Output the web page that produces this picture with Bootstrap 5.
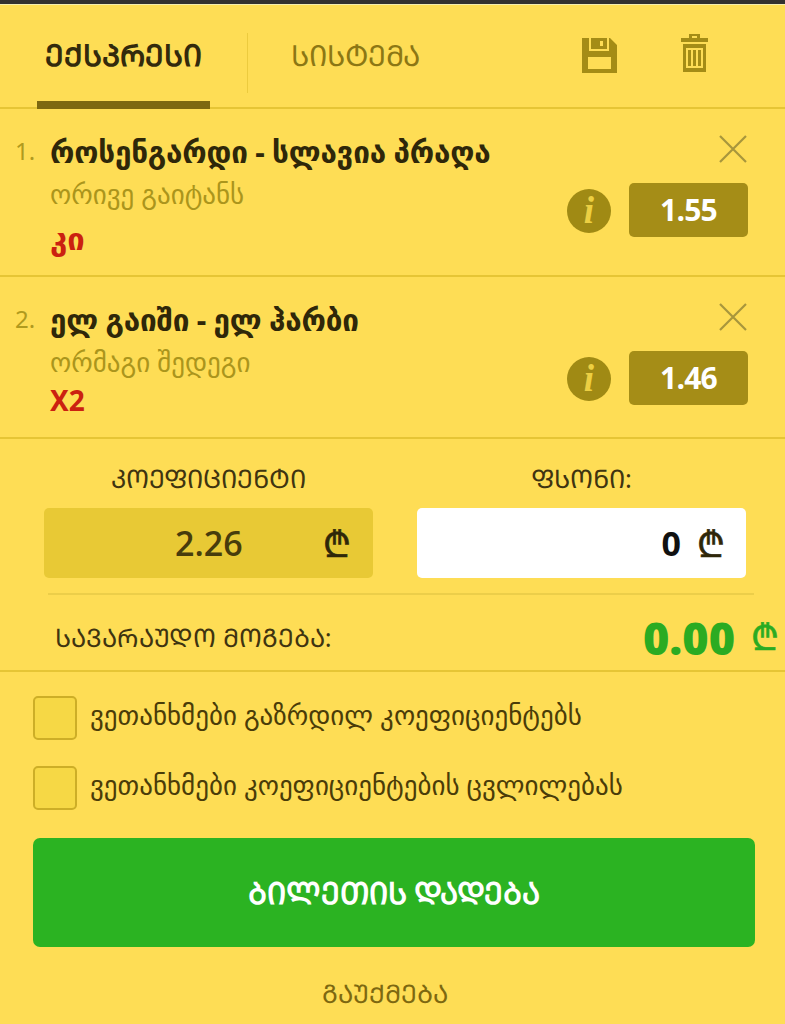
<!DOCTYPE html>
<html>
<head>
    <title>ბილეთი</title>
    <link href="https://cdn.jsdelivr.net/npm/bootstrap@5.3.0/dist/css/bootstrap.min.css" rel="stylesheet">
    <style>
        body { background: #fedd55; font-family: "Noto Sans", "DejaVu Sans", sans-serif; color: #3a3010; height: 1024px; overflow: hidden; }
        .topstrip { height: 5px; background: #333130; border-bottom: 1px solid #f5eeb0; }
        .tabbar { height: 104px; border-bottom: 2px solid #e6c535; }
        .tab-item { line-height: 1; padding-top: 35px; height: 104px; }
        .tab-on { width: 173px; margin-left: 37px; font-size: 30px; font-weight: 700; border-bottom: 8px solid #7d6810; text-align: center; color: #332a0c; }
        .tab-sep { width: 1px; height: 60px; margin: 28px 0 0 37px; background: #eccb3e; }
        .tab-off { margin-left: 43px; font-size: 29px; color: #8c7714; }
        .tab-icons { margin-left: auto; padding: 33px 77px 0 0; gap: 64px; }
        .tab-trash { margin-top: -4px; }
        .slip-row { border-bottom: 2px solid #e6c535; position: relative; padding-left: 50px; }
        .slip-first { height: 168px; padding-top: 24px; }
        .slip-second { height: 162px; padding-top: 24px; }
        .slip-no { position: absolute; left: 15px; top: 30px; font-size: 24px; line-height: 1; color: #b09a1e; }
        .slip-title { font-size: 29.7px; font-weight: 700; line-height: 38px; color: #2f2709; letter-spacing: -.2px; }
        .slip-pick { font-size: 27px; line-height: 30px; margin-top: 8px; color: #ab951c; }
        .slip-mark { font-size: 28px; font-weight: 700; line-height: 30px; margin-top: 14px; color: #cb2110; }
        .slip-first .slip-mark { font-size: 31px; }
        .slip-second .slip-mark { margin-top: 8px; }
        .slip-close { position: absolute; left: 719px; top: 26px; }
        .slip-info { position: absolute; left: 567px; top: 80px; width: 44px; height: 44px; border-radius: 50%; background: #a08a14; color: #edcf42; font: italic 700 37px/44px "Liberation Serif", serif; text-align: center; }
        .slip-odds { position: absolute; left: 629px; top: 74px; width: 119px; height: 54px; border-radius: 5px; background: #a58d17; color: #fff; font: 700 30px/54px "Open Sans", sans-serif; text-align: center; letter-spacing: -.8px; }
        .sum-wrap { padding: 25px 39px 0 44px; gap: 44px; }
        .sum-col { width: 329px; }
        .sum-label { font-size: 25.7px; line-height: 30px; text-align: center; color: #3f3410; height: 44px; }
        .sum-box { height: 70px; border-radius: 5px; font: 600 34px/70px "Open Sans", sans-serif; }
        .sum-rate { background: #e8c935; color: #473c0c; padding: 0 22px 0 131px; }
        .sum-stake { background: #fff; color: #111; padding: 0 21px 0 0; font-weight: 700; }
        .lari { font-family: "DejaVu Sans", sans-serif; font-size: 36px; font-weight: 400; line-height: 74px; color: #2f2709; -webkit-text-stroke: .6px #2f2709; }
        .sum-rule { height: 2px; margin: 15px 31px 0 48px; background: #ecce4a; }
        .win-row { height: 77px; border-bottom: 2px solid #e6c535; padding: 10px 6px 0 55px; }
        .win-label { font-size: 25.5px; color: #3f3410; }
        .win-amount { font: 800 45px/1 "Open Sans", sans-serif; color: #2bab22; }
        .win-lari { color: #2bab22; margin-left: 16px; font-size: 36px; font-family: "DejaVu Sans", sans-serif; -webkit-text-stroke: .6px #2bab22; }
        .agree { padding: 24px 30px 0 33px; }
        .agree-line { height: 44px; margin-bottom: 26px; gap: 13px; font-size: 27px; color: #4a3c08; }
        .agree-text { margin-top: -6px; }
        .agree-line .form-check-input { width: 44px; height: 44px; margin: 0; background-color: #f6d845; border: 2px solid #cdae27; border-radius: 5px; flex: none; }
        .place-bet { display: block; width: 722px; height: 109px; margin: 28px 0 0 33px; background: #2bb322; border: 0; border-radius: 7px; color: #fff; font-size: 30.3px; font-weight: 700; }
        .place-bet:hover { background: #2bb322; color: #fff; }
        .cancel-link { display: block; text-align: center; margin-top: 31px; padding-right: 15px; font-size: 25.7px; line-height: 32px; color: #7d6810; text-decoration: none; }
    </style>
</head>
<body>
    <div class="topstrip"></div>

    <div class="tabbar d-flex">
        <div class="tab-item tab-on">ᲔᲥᲡᲞᲠᲔᲡᲘ</div>
        <div class="tab-sep"></div>
        <div class="tab-item tab-off">ᲡᲘᲡᲢᲔᲛᲐ</div>
        <div class="tab-icons d-flex">
            <svg width="35" height="35" viewBox="0 0 35 35"><path fill="#a48c16" fill-rule="evenodd" d="M0 0H28L35 7V35H0ZM7 0V13H27V0ZM9 0V11H25V0ZM18 3H21V8H18ZM6 19V31H29V19Z"/></svg>
            <svg class="tab-trash" width="27" height="38" viewBox="0 0 27 38"><path fill="#a48c16" fill-rule="evenodd" d="M8 0H19V4H27V8H0V4H8ZM11 2V4H16V2ZM2 10H25V38H2ZM5 14V34H22V14ZM7 16H10V32H7ZM12 16H15V32H12ZM17 16H20V32H17Z"/></svg>
        </div>
    </div>

    <div class="slip-row slip-first">
        <span class="slip-no">1.</span>
        <div class="slip-title">როსენგარდი - სლავია პრაღა</div>
        <div class="slip-pick">ორივე გაიტანს</div>
        <div class="slip-mark">კი</div>
        <svg class="slip-close" width="28" height="28" viewBox="0 0 28 28"><path stroke="#a8963c" stroke-width="2.2" fill="none" d="M1 1L27 27M27 1L1 27"/></svg>
        <span class="slip-info">i</span>
        <span class="slip-odds">1.55</span>
    </div>

    <div class="slip-row slip-second">
        <span class="slip-no">2.</span>
        <div class="slip-title">ელ გაიში - ელ ჰარბი</div>
        <div class="slip-pick">ორმაგი შედეგი</div>
        <div class="slip-mark">X2</div>
        <svg class="slip-close" width="28" height="28" viewBox="0 0 28 28"><path stroke="#a8963c" stroke-width="2.2" fill="none" d="M1 1L27 27M27 1L1 27"/></svg>
        <span class="slip-info">i</span>
        <span class="slip-odds">1.46</span>
    </div>

    <div class="sum-wrap d-flex">
        <div class="sum-col">
            <div class="sum-label">ᲙᲝᲔᲤᲘᲪᲘᲔᲜᲢᲘ</div>
            <div class="sum-box sum-rate d-flex justify-content-between"><span>2.26</span><span class="lari">₾</span></div>
        </div>
        <div class="sum-col">
            <div class="sum-label">ᲤᲡᲝᲜᲘ:</div>
            <div class="sum-box sum-stake d-flex justify-content-end gap-3"><span>0</span><span class="lari">₾</span></div>
        </div>
    </div>
    <div class="sum-rule"></div>

    <div class="win-row d-flex align-items-center justify-content-between">
        <span class="win-label">ᲡᲐᲕᲐᲠᲐᲣᲓᲝ ᲛᲝᲒᲔᲑᲐ:</span>
        <span class="d-flex align-items-center"><span class="win-amount">0.00</span><span class="win-lari">₾</span></span>
    </div>

    <div class="agree">
        <label class="agree-line d-flex align-items-center"><input class="form-check-input" type="checkbox"><span class="agree-text">ვეთანხმები გაზრდილ კოეფიციენტებს</span></label>
        <label class="agree-line d-flex align-items-center"><input class="form-check-input" type="checkbox"><span class="agree-text">ვეთანხმები კოეფიციენტების ცვლილებას</span></label>
    </div>

    <button class="btn place-bet" type="button">ᲑᲘᲚᲔᲗᲘᲡ ᲓᲐᲓᲔᲑᲐ</button>
    <a class="cancel-link" href="#">ᲒᲐᲣᲥᲛᲔᲑᲐ</a>

    <script src="https://cdn.jsdelivr.net/npm/bootstrap@5.3.0/dist/js/bootstrap.bundle.min.js"></script>
</body>
</html>
